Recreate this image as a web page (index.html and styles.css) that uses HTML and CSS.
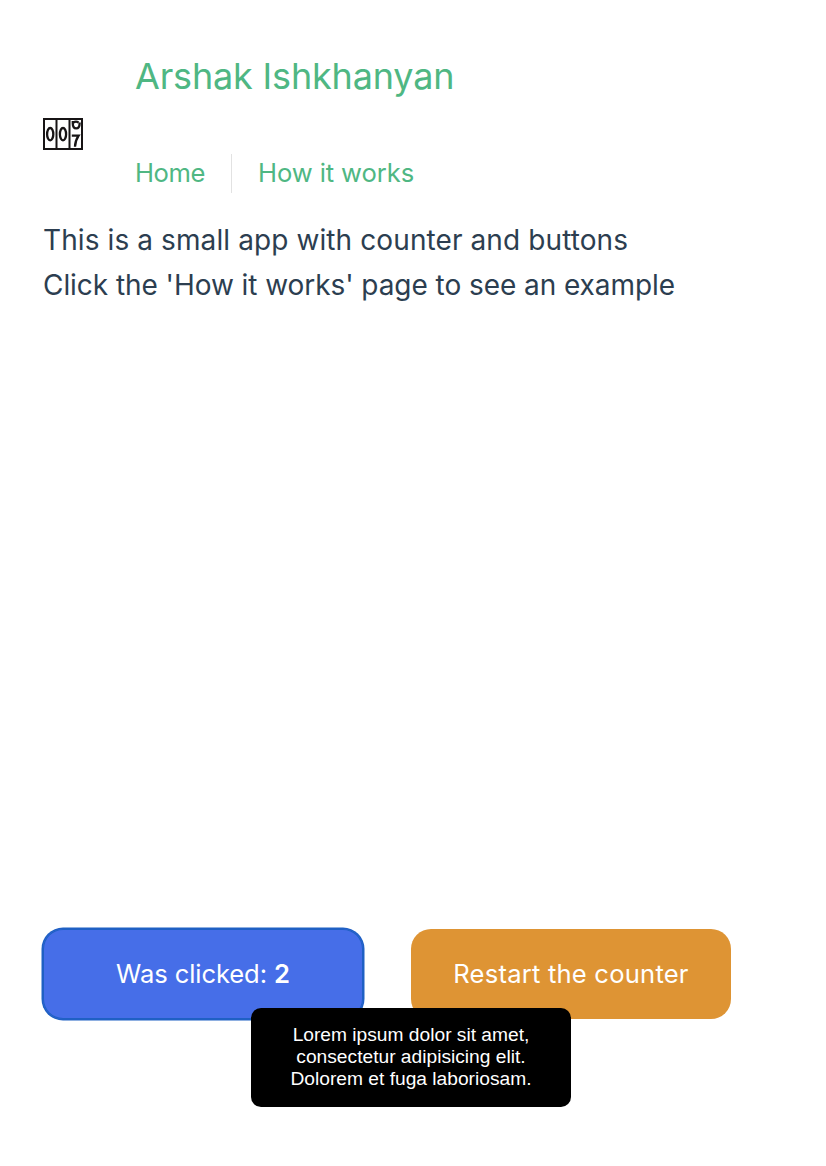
FILE: index.html
```html
<!DOCTYPE html>
<html lang="en">
<head>
<meta charset="utf-8">
<title>Counter</title>
<link rel="stylesheet" href="styles.css">
</head>
<body>
<main class="app">
  <header class="header">
    <svg class="logo" viewBox="0 0 40 32" width="40" height="32" fill="none" stroke="#171415" stroke-width="2">
      <rect x="1" y="1" width="38" height="30"/>
      <path d="M13.500 1v30M26.500 1v30"/>
      <g stroke-width="2.300">
        <ellipse cx="7.200" cy="16.200" rx="3.100" ry="6.200"/>
        <ellipse cx="20" cy="16.200" rx="3.100" ry="6.200"/>
        <path d="M29.800 3v2.500c0 6.500 6.800 6.500 6.800 0V4.500M30.500 4.500c1.500-1 3.500-1 5 0M28.800 17.700h6.800c-2 3-3.400 6-3.600 11"/>
      </g>
    </svg>
    <div class="wrapper">
      <h1 class="title">Arshak Ishkhanyan</h1>
      <nav class="nav"><a class="link home">Home</a><a class="link">How it works</a></nav>
    </div>
  </header>
  <section class="intro">
    <p class="line first">This is a small app with counter and buttons</p>
    <p class="line second">Click the 'How it works' page to see an example</p>
  </section>
  <div class="actions">
    <button class="button count"><span>Was clicked: <b>2</b></span></button>
    <button class="button restart"><span>Restart the counter</span></button>
    <div class="tooltip">Lorem ipsum dolor sit amet,<br>consectetur adipisicing elit.<br>Dolorem et fuga laboriosam.</div>
  </div>
</main>
</body>
</html>
```
FILE: styles.css
```css
* { box-sizing: border-box; margin: 0; }
body { background: #fff; color: #2c3e50; font-family: Inter, sans-serif; }
.app { height: 1166px; padding: 46px 43px; display: flex; flex-direction: column; }
.header { display: flex; align-items: flex-start; gap: 52px; height: 172px; color: #4fb783; }
.logo { flex: none; margin-top: 72px; }
.title { font-size: 36px; font-weight: 400; line-height: 60px; letter-spacing: -0.17px; }
.nav { display: flex; margin-top: 48px; font-size: 25.600px; line-height: 37px; letter-spacing: -0.1px; }
.link { height: 39px; }
.home { width: 70px; letter-spacing: -0.4px; }
.link + .link { border-left: 1px solid #e2e2e2; padding-left: 26px; margin-left: 26px; }
.line { font-size: 28px; font-weight: 400; line-height: 45px; white-space: nowrap; }
.first { letter-spacing: 0.1px; }
.second { letter-spacing: -0.06px; }
.actions { position: relative; display: flex; gap: 48px; margin-top: 621px; }
.button { width: 320px; height: 90px; padding: 0 0 2px; border: 0; border-radius: 20px; color: #fff; font: 380 25.600px Inter, sans-serif; }
.button b { font-weight: 600; }
.count { background: #466ee8; box-shadow: 0 0 0 1.500px #1f60c4, inset 0 0 0 1px #1f60c4; letter-spacing: -0.1px; }
.restart { background: #de9434; letter-spacing: 0.2px; }
.tooltip { position: absolute; left: 208px; top: 79px; width: 320px; height: 99px; padding-top: 16px; border-radius: 10px; background: #000; color: #fff; text-align: center; font: 19.200px/22px "Liberation Sans", sans-serif; }
```
